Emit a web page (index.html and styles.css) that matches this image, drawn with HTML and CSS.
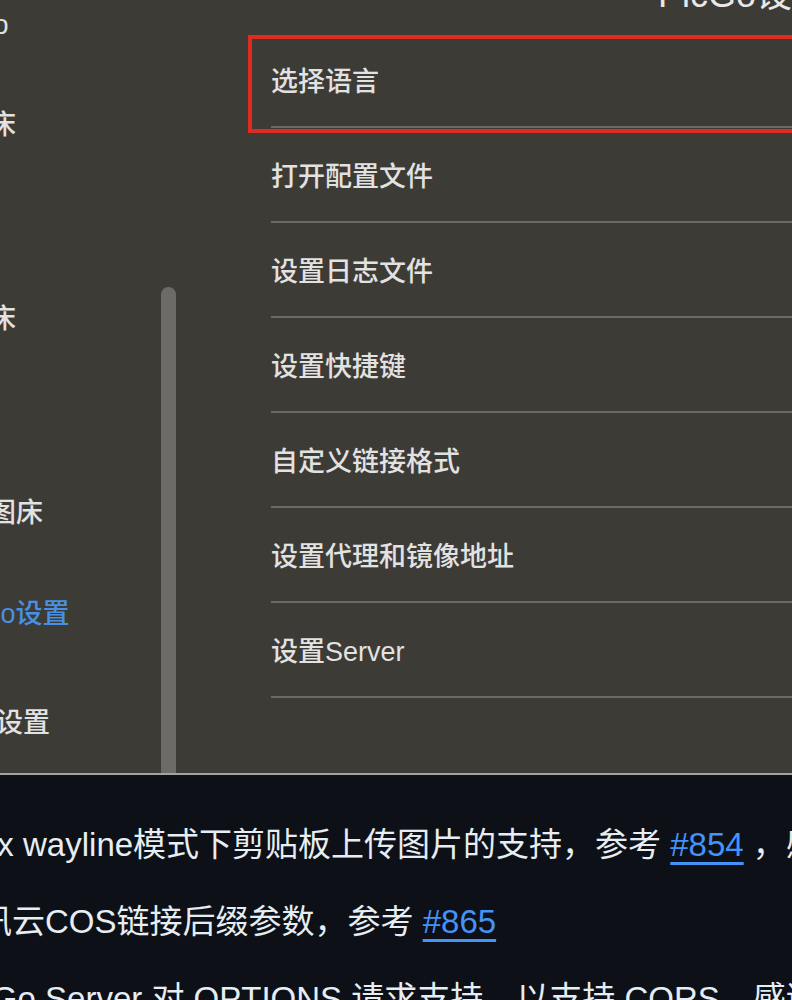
FILE: index.html
```html
<!DOCTYPE html>
<html lang="zh-CN">
<head>
<meta charset="utf-8">
<title>PicGo设置</title>
<link rel="stylesheet" href="styles.css">
</head>
<body>
<div class="shot">
  <aside class="side">
    <ul class="menu">
      <li class="menu-item menu-item--sub">PicGo</li>
      <li class="menu-item menu-item--sub">云图床</li>
      <li class="menu-item menu-item--top">相册</li>
      <li class="menu-item menu-item--sub">云图床</li>
      <li class="menu-item menu-item--top">上传</li>
      <li class="menu-item menu-item--sub">七牛图床</li>
      <li class="menu-item menu-item--top menu-item--active">PicGo设置</li>
      <li class="menu-item menu-item--top menu-item--gap">插件设置</li>
    </ul>
  </aside>
  <div class="scroll"><div class="scroll-thumb"></div></div>
  <main class="main">
    <h1 class="title">PicGo设置 - 设置</h1>
    <ul class="opts">
      <li class="opt">选择语言<span class="mark"></span></li>
      <li class="opt">打开配置文件</li>
      <li class="opt">设置日志文件</li>
      <li class="opt">设置快捷键</li>
      <li class="opt">自定义链接格式</li>
      <li class="opt">设置代理和镜像地址</li>
      <li class="opt">设置Server</li>
    </ul>
  </main>
</div>
<section class="notes">
  <ul class="notes-list">
    <li class="note">新增linux wayline模式下剪贴板上传图片的支持，参考 <a class="ref" href="#">#854</a> ，感谢 @contributor</li>
    <li class="note">新增腾讯云COS链接后缀参数，参考 <a class="ref" href="#">#865</a></li>
    <li class="note">新增PicGo Server 对 OPTIONS 请求支持，以支持 CORS，感谢 @contributor</li>
  </ul>
</section>
</body>
</html>
```
FILE: styles.css
```css
html, body {
  margin: 0;
  padding: 0;
  background: #0d1117;
  overflow: hidden;
}

.shot {
  display: flex;
  height: 773px;
  background: #3d3b36;
  border-bottom: 2px solid #a3a3a3;
  overflow: hidden;
  font-family: "Liberation Sans", "Noto Sans CJK SC", sans-serif;
  font-weight: 500;
  color: #e2e2e2;
}

.side {
  flex: none;
  width: 161px;
  overflow: hidden;
}

.menu {
  list-style: none;
  margin: -23.5px 0 0 -120px;
  padding: 0;
}

.menu-item {
  display: flex;
  align-items: center;
  height: 97px;
  font-size: 27px;
  white-space: nowrap;
}

.menu-item--top { padding-left: 62px; }
.menu-item--sub { padding-left: 55px; }
.menu-item--active { color: #4a90e2; margin-top: 4px; }
.menu-item--gap { margin-top: 12px; }

.scroll {
  flex: none;
  width: 15px;
  display: flex;
  flex-direction: column;
  padding-top: 287px;
}

.scroll-thumb {
  flex: 1;
  background: #6c6b68;
  border-radius: 8px 8px 0 0;
}

.main {
  flex: 1;
  min-width: 0;
  margin-left: 95px;
}

.title {
  margin: -23.5px 0 20.5px;
  padding-left: 387px;
  font-size: 36px;
  line-height: 36px;
  font-weight: normal;
  white-space: nowrap;
  color: #e8e8e8;
}

.opts {
  list-style: none;
  margin: 0;
  padding: 0;
}

.opt {
  position: relative;
  display: flex;
  align-items: center;
  height: 93px;
  border-bottom: 2px solid #6b6a66;
  font-size: 27px;
  white-space: nowrap;
}

.mark {
  position: absolute;
  left: -23px;
  top: 2px;
  right: -30px;
  bottom: -7px;
  border: 4px solid #e02b21;
}

.notes {
  overflow: hidden;
  padding-top: 50px;
  font-family: "Liberation Sans", "Noto Sans CJK SC", sans-serif;
  font-size: 33px;
  color: #e6edf3;
}

.notes-list {
  list-style: none;
  margin: 0 0 0 -120px;
  padding: 0;
}

.note {
  line-height: 40px;
  margin-bottom: 37px;
  white-space: nowrap;
}

.ref {
  color: #4493f8;
  text-decoration: underline;
  text-decoration-thickness: 3px;
  text-underline-offset: 6px;
}
```
